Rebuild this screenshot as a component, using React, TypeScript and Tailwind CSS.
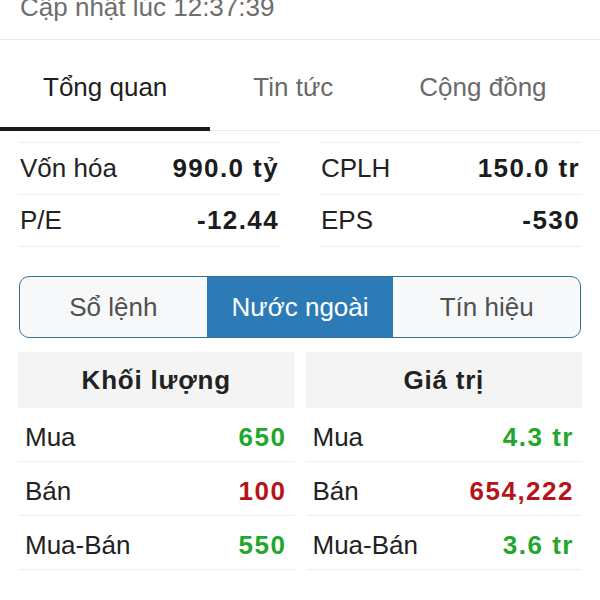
import { JSX } from 'react'
import clsx from 'clsx'

type Stat = { label: string; value: string }

const leftStats: Stat[] = [
  { label: 'Vốn hóa', value: '990.0 tỷ' },
  { label: 'P/E', value: '-12.44' }
]
const rightStats: Stat[] = [
  { label: 'CPLH', value: '150.0 tr' },
  { label: 'EPS', value: '-530' }
]

type Flow = { label: string; value: string; up: boolean }

const volume: Flow[] = [
  { label: 'Mua', value: '650', up: true },
  { label: 'Bán', value: '100', up: false },
  { label: 'Mua-Bán', value: '550', up: true }
]
const worth: Flow[] = [
  { label: 'Mua', value: '4.3 tr', up: true },
  { label: 'Bán', value: '654,222', up: false },
  { label: 'Mua-Bán', value: '3.6 tr', up: true }
]

function StatColumn(props: { items: Stat[] }): JSX.Element {
  return (
    <div className="border-t border-[#eeeeee]">
      {props.items.map((s) => (
        <div
          key={s.label}
          className="h-[52px] flex items-center justify-between px-[2px] border-b border-[#eeeeee]"
        >
          <span className="text-[#222]">{s.label}</span>
          <span className="font-bold tracking-[1.4px] text-[#1c1c1c]">{s.value}</span>
        </div>
      ))}
    </div>
  )
}

function FlowColumn(props: { title: string; items: Flow[] }): JSX.Element {
  return (
    <div>
      <div className="h-[56px] flex items-center justify-center bg-[#f4f4f4] font-bold tracking-[0.8px] text-[#222]">
        {props.title}
      </div>
      {props.items.map((f) => (
        <div
          key={f.label}
          className="h-[54px] flex items-center justify-between pl-[7px] pr-[8px] pt-[6px] border-b border-[#efefef]"
        >
          <span className="text-[#222]">{f.label}</span>
          <span
            className={clsx(
              'font-bold tracking-[1.5px]',
              f.up ? 'text-[#22a62c]' : 'text-[#b5141c]'
            )}
          >
            {f.value}
          </span>
        </div>
      ))}
    </div>
  )
}

export default function App(): JSX.Element {
  const tabs = ['Tổng quan', 'Tin tức', 'Cộng đồng']
  const segments = ['Sổ lệnh', 'Nước ngoài', 'Tín hiệu']

  return (
    <div className="w-[600px] h-[600px] overflow-hidden bg-white text-[26px] font-['Liberation_Sans',Arial,sans-serif]">
      <div className="h-[40px] border-b border-[#ebebeb] pl-[20px] overflow-hidden">
        <div className="-mt-[6px] leading-[26px] text-[#6e6e6e]">Cập nhật lúc 12:37:39</div>
      </div>

      <div className="flex border-b border-[#e8e8e8]">
        {tabs.map((t, i) => (
          <div
            key={t}
            className={clsx(
              'h-[91px] -mb-px flex items-center px-[43px] pt-[8px] border-b-4',
              i === 0 ? 'border-[#1a1a1a] text-[#1e1e1e]' : 'border-transparent text-[#6a6a6a]'
            )}
          >
            {t}
          </div>
        ))}
      </div>

      <div className="mt-[11px] px-[18px] grid grid-cols-2 gap-x-[38px]">
        <StatColumn items={leftStats} />
        <StatColumn items={rightStats} />
      </div>

      <div className="mt-[29px] mx-[19px] h-[62px] flex border-[1.5px] border-[#34719b] rounded-[10px] overflow-hidden bg-[#f7f8fa]">
        {segments.map((s, i) => (
          <div
            key={s}
            className={clsx(
              'flex-1 flex items-center justify-center',
              i === 1 ? 'bg-[#2c7bb6] text-white' : 'text-[#505050]'
            )}
          >
            {s}
          </div>
        ))}
      </div>

      <div className="mt-[14px] px-[18px] grid grid-cols-2 gap-x-[11px]">
        <FlowColumn title="Khối lượng" items={volume} />
        <FlowColumn title="Giá trị" items={worth} />
      </div>
    </div>
  )
}
